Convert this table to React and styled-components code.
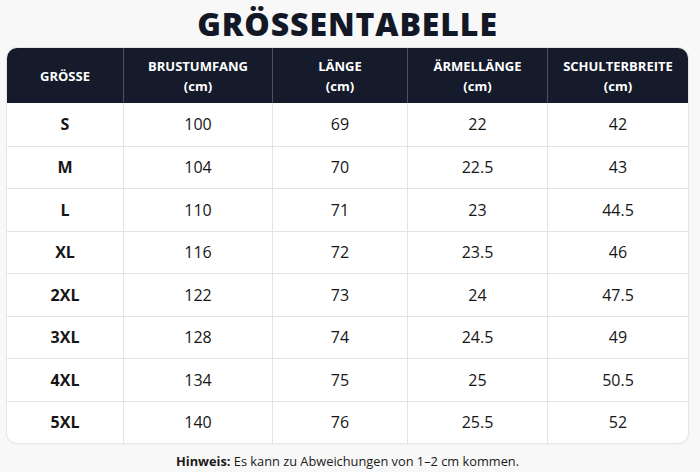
import React from "react";
import styled, { createGlobalStyle } from "styled-components";

const GlobalStyle = createGlobalStyle`
  html, body {
    margin: 0;
    padding: 0;
    background: #f8f8f8;
  }
  body {
    font-family: "Open Sans", "Liberation Sans", sans-serif;
    color: #151a26;
  }
`;

const Page = styled.div`
  width: 700px;
  height: 472px;
  padding: 0 12px 0 7px;
  box-sizing: border-box;
  display: flex;
  flex-direction: column;
  align-items: stretch;
`;

const Title = styled.h1`
  margin: 0;
  height: 48px;
  line-height: 48px;
  font-size: 32px;
  font-weight: 800;
  text-align: center;
  color: #131827;
  letter-spacing: 0.9px;
`;

const Table = styled.table`
  width: 681px;
  border-collapse: separate;
  border-spacing: 0;
  table-layout: fixed;
  background: #fff;
  border-radius: 10px;
  overflow: hidden;
  box-shadow: 0 0 0 1px #e6e6e6, 0 1px 3px rgba(0, 0, 0, 0.06);
`;

const HeadCell = styled.th`
  width: ${(p) => p.$w}px;
  height: 55px;
  padding: 0;
  background: #151b2b;
  color: #fff;
  font-size: 13px;
  font-weight: 700;
  line-height: 20px;
  text-align: center;
  vertical-align: middle;
  border-left: ${(p) => (p.$first ? "none" : "1px solid #4a505e")};
  box-sizing: border-box;
`;

const Cell = styled.td`
  height: 42.5px;
  padding: 0;
  text-align: center;
  vertical-align: middle;
  font-size: 16px;
  font-weight: ${(p) => (p.$bold ? 700 : 400)};
  color: #161616;
  border-left: ${(p) => (p.$first ? "none" : "1px solid #e4e4e4")};
  border-top: ${(p) => (p.$top ? "none" : "1px solid #e4e4e4")};
  box-sizing: border-box;
`;

const Note = styled.p`
  margin: 9px 0 0;
  font-size: 12.8px;
  text-align: center;
  color: #1a1a1a;

  strong {
    font-weight: 700;
  }
`;

const columns = [
  { label: "GRÖSSE", w: 116 },
  { label: "BRUSTUMFANG", unit: "(cm)", w: 149 },
  { label: "LÄNGE", unit: "(cm)", w: 135 },
  { label: "ÄRMELLÄNGE", unit: "(cm)", w: 140 },
  { label: "SCHULTERBREITE", unit: "(cm)", w: 141 },
];

const rows = [
  ["S", "100", "69", "22", "42"],
  ["M", "104", "70", "22.5", "43"],
  ["L", "110", "71", "23", "44.5"],
  ["XL", "116", "72", "23.5", "46"],
  ["2XL", "122", "73", "24", "47.5"],
  ["3XL", "128", "74", "24.5", "49"],
  ["4XL", "134", "75", "25", "50.5"],
  ["5XL", "140", "76", "25.5", "52"],
];

export default function App() {
  return (
    <Page>
      <GlobalStyle />
      <Title>GRÖSSENTABELLE</Title>
      <Table>
        <thead>
          <tr>
            {columns.map((c, i) => (
              <HeadCell key={c.label} $w={c.w} $first={i === 0}>
                {c.label}
                {c.unit && (
                  <>
                    <br />
                    {c.unit}
                  </>
                )}
              </HeadCell>
            ))}
          </tr>
        </thead>
        <tbody>
          {rows.map((r, ri) => (
            <tr key={r[0]}>
              {r.map((v, ci) => (
                <Cell key={ci} $bold={ci === 0} $first={ci === 0} $top={ri === 0}>
                  {v}
                </Cell>
              ))}
            </tr>
          ))}
        </tbody>
      </Table>
      <Note>
        <strong>Hinweis:</strong> Es kann zu Abweichungen von 1–2 cm kommen.
      </Note>
    </Page>
  );
}
